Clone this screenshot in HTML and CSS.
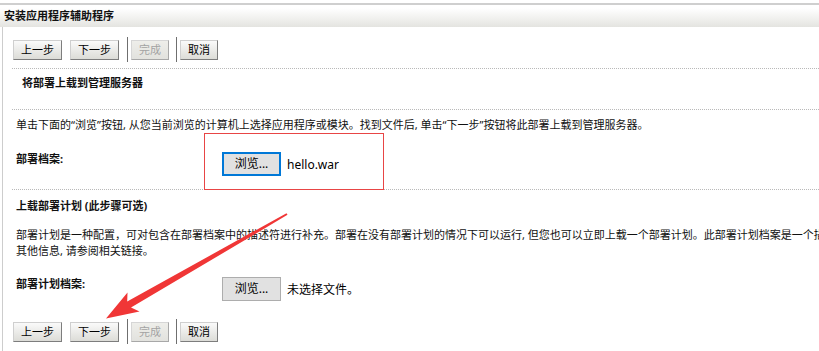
FILE: index.html
```html
<!DOCTYPE html>
<html lang="zh-CN">
  <head>
    <meta charset="UTF-8" />
    <title>安装应用程序辅助程序</title>
    <link rel="stylesheet" href="styles.css">
  </head>
  <body>
    <div class="page">
      <div class="title">安装应用程序辅助程序</div>
      <div class="content">
        <div class="toolbar">
          <button class="btn wide">上一步</button>
          <button class="btn wide next">下一步</button>
          <span class="sep"></span>
          <button class="btn" disabled>完成</button>
          <span class="sep"></span>
          <button class="btn">取消</button>
        </div>

        <div class="step_title">将部署上载到管理服务器</div>

        <div class="block">
          <p class="desc first">单击下面的“浏览”按钮, 从您当前浏览的计算机上选择应用程序或模块。找到文件后, 单击“下一步”按钮将此部署上载到管理服务器。</p>
          <div class="field">
            <span class="label">部署档案:</span>
            <span class="file">
              <span class="browse focused">浏览...</span>
              <span class="fname">hello.war</span>
            </span>
          </div>
        </div>

        <div class="block">
          <div class="sub_title">上载部署计划 (此步骤可选)</div>
          <p class="desc plan">部署计划是一种配置，可对包含在部署档案中的描述符进行补充。部署在没有部署计划的情况下可以运行, 但您也可以立即上载一个部署计划。此部署计划档案是一个描述应用程序部署配置的 XML 文件。有关部署计划的<br>其他信息, 请参阅相关链接。</p>
          <div class="field">
            <span class="label">部署计划档案:</span>
            <span class="file">
              <span class="browse">浏览...</span>
              <span class="fname">未选择文件。</span>
            </span>
          </div>
        </div>

        <div class="toolbar bottom">
          <button class="btn wide">上一步</button>
          <button class="btn wide next">下一步</button>
          <span class="sep"></span>
          <button class="btn" disabled>完成</button>
          <span class="sep"></span>
          <button class="btn">取消</button>
        </div>
      </div>

      <!-- annotations drawn over the screenshot -->
      <div class="callout"></div>
      <svg class="arrow" width="819" height="351" viewBox="0 0 819 351">
        <polygon fill="#f03636" points="286.5,213.2 127.2,301.4 127.5,292.5 106,318.5 139.5,311.5 131,307.6 287.5,214.8" />
      </svg>
    </div>
  </body>
</html>
```

FILE: styles.css
```css
html, body {
  margin: 0;
  padding: 0;
  overflow: hidden;
  background: #ffffff;
}
.page {
  position: relative;
  width: 819px;
  height: 351px;
  padding-top: 3px;
  box-sizing: border-box;
  overflow: hidden;
  font-family: "Noto Sans", "Noto Sans CJK SC", sans-serif;
  font-size: 11px;
  color: #111;
}
.title {
  height: 22px;
  line-height: 22px;
  padding-left: 4px;
  border-top: 2px solid #cfcfcf;
  background: linear-gradient(#ffffff 15%, #e4e4e0);
  font-weight: bold;
  font-size: 11px;
}
.content {
  margin-left: 2px;
  border-left: 1px solid #cdcdcd;
  padding-left: 9px;
  padding-bottom: 20px;
}
.toolbar {
  display: flex;
  align-items: center;
  padding: 10px 0 6px 1px;
}
.toolbar.bottom {
  padding-top: 5px;
}
.btn {
  height: 20px;
  width: 38px;
  padding: 0;
  margin: 0 4px 0 0;
  font-family: "Noto Sans", "Noto Sans CJK SC", sans-serif;
  font-size: 11px;
  line-height: 18px;
  color: #000;
  background: linear-gradient(#fafafa, #dcdcd7);
  border: 1px solid;
  border-color: #cfcfcf #7d7d7d #7d7d7d #cfcfcf;
  border-radius: 0;
}
.btn.wide {
  width: 49px;
  margin-right: 8px;
}
.btn[disabled] {
  color: #a3a3a3;
  background: linear-gradient(#eeeeea, #e2e2de);
  border-color: #d6d6d6 #a8a8a8 #a8a8a8 #d6d6d6;
  margin-right: 7px;
}
.sep {
  width: 1px;
  height: 25px;
  background: #6f6f6f;
  margin-right: 3px;
}
.step_title {
  border-top: 1px dotted #b9b9b9;
  padding: 6px 0 18px 10px;
  line-height: 16px;
  font-weight: bold;
}
.block {
  border-top: 1px dotted #b9b9b9;
  padding: 0 0 13px 4px;
}
.desc {
  margin: 0;
  line-height: 16px;
  white-space: nowrap;
}
.desc.first {
  padding-top: 7px;
}
.desc.plan {
  margin-top: 13px;
}
.sub_title {
  padding-top: 8px;
  line-height: 16px;
  font-weight: bold;
}
.field {
  display: flex;
  align-items: flex-start;
  margin-top: 19px;
}
.block .plan + .field {
  margin-top: 18px;
}
.label {
  width: 206px;
  line-height: 14px;
  font-weight: bold;
}
.file {
  display: flex;
  align-items: center;
  font-size: 12px;
  color: #000;
}
.browse {
  width: 59px;
  height: 24px;
  box-sizing: border-box;
  border: 1px solid #adadad;
  background: #e1e1e1;
  text-align: center;
  line-height: 22px;
}
.browse.focused {
  border: 2px solid #0078d7;
  line-height: 20px;
}
.fname {
  margin-left: 6px;
}
.callout {
  position: absolute;
  left: 204px;
  top: 133px;
  width: 178px;
  height: 55px;
  border: 1px solid #e84545;
}
.arrow {
  position: absolute;
  left: 0;
  top: 0;
}
```
